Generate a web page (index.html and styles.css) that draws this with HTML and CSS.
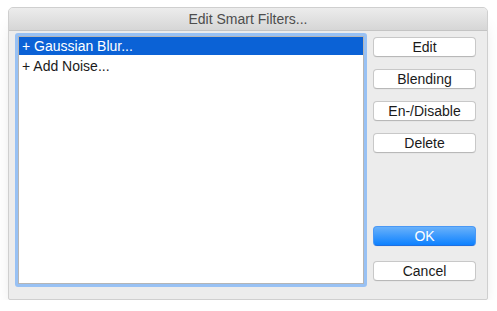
FILE: index.html
```html
<!DOCTYPE html>
<html>
<head>
<meta charset="utf-8">
<link rel="stylesheet" href="styles.css">
</head>
<body>
<div class="window">
  <div class="titlebar">Edit Smart Filters...</div>
  <div class="content">
    <div class="listbox">
      <div class="list">
        <div class="row selected">+ Gaussian Blur...</div>
        <div class="row">+ Add Noise...</div>
      </div>
    </div>
    <div class="buttons">
      <div class="group">
        <button class="btn">Edit</button>
        <button class="btn">Blending</button>
        <button class="btn">En-/Disable</button>
        <button class="btn">Delete</button>
      </div>
      <div class="group bottom">
        <button class="btn primary">OK</button>
        <button class="btn">Cancel</button>
      </div>
    </div>
  </div>
</div>
</body>
</html>
```
FILE: styles.css
```css
* { box-sizing: border-box; }
html, body { margin: 0; padding: 0; background: #ffffff; }
body {
  font-family: "Liberation Sans", Arial, sans-serif;
  font-size: 14px;
  color: #1a1a1a;
}
.window {
  margin: 7px 0 0 8px;
  width: 480px;
  height: 293px;
  background: #ececec;
  border: 1px solid #cfcfcf;
  border-radius: 5px 5px 2px 2px;
  box-shadow: 0 12px 18px -8px rgba(0,0,0,0.2);
  display: flex;
  flex-direction: column;
  overflow: hidden;
}
.titlebar {
  height: 23px;
  flex: none;
  background: linear-gradient(#ececec, #d6d6d6);
  border-bottom: 1px solid #c4c4c4;
  text-align: center;
  line-height: 22px;
  color: #4d4d4d;
  font-size: 14px;
}
.content {
  flex: 1;
  display: flex;
  padding: 2px 11px 12px 6px;
  gap: 6px;
}
.listbox {
  width: 352px;
  border: 3px solid #98c1f4;
  border-radius: 3px;
}
.list {
  height: 100%;
  background: #ffffff;
  border: 1px solid #b5b5b5;
  padding: 0;
}
.row {
  height: 19px;
  line-height: 19px;
  padding-left: 3px;
  white-space: nowrap;
}
.row.selected {
  background: #0b62d6;
  color: #ffffff;
  height: 18px;
  line-height: 18px;
  margin-bottom: 2px;
}
.buttons {
  flex: 1;
  display: flex;
  flex-direction: column;
  justify-content: space-between;
  padding: 4px 0 6px 0;
}
.group {
  display: flex;
  flex-direction: column;
  gap: 12px;
}
.group.bottom { gap: 15px; }
.btn {
  width: 103px;
  height: 20px;
  padding: 0;
  font-family: "Liberation Sans", Arial, sans-serif;
  font-size: 14px;
  color: #1a1a1a;
  background: #ffffff;
  border: 1px solid #c8c8c8;
  border-bottom-color: #b8b8b8;
  border-radius: 4px;
  box-shadow: 0 0.5px 0 rgba(0,0,0,0.05);
  line-height: 18px;
}
.btn.primary {
  color: #ffffff;
  background: linear-gradient(#69b1fa, #0d81ff);
  border: 1px solid #4a98f5;
  border-bottom-color: #1f6fe0;
}
```
